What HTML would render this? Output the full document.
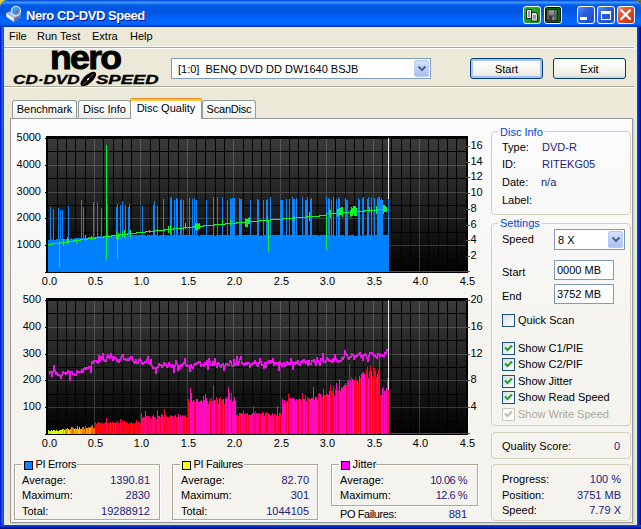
<!DOCTYPE html>
<html><head><meta charset="utf-8"><title>Nero CD-DVD Speed</title>
<style>
html,body{margin:0;padding:0;}
body{width:641px;height:529px;overflow:hidden;background:#ECE9D8;font-family:"Liberation Sans",sans-serif;font-size:11px;color:#000;position:relative;}
.a{position:absolute;white-space:nowrap;line-height:13px;}
.v{color:#1b1b7a;text-align:right;}
.bl{color:#0046D5;}
#win{position:absolute;left:0;top:0;width:641px;height:529px;background:#ECE9D8;}
#tbar{position:absolute;left:0;top:0;width:641px;height:27px;border-radius:7px 7px 0 0;
 background:linear-gradient(180deg,#0951DC 0px,#0B55DE 1px,#2C82F8 1.6px,#3C96FF 2.5px,#2680F6 3.5px,#0B66EA 4.5px,#0358E4 6px,#0055E2 8px,#0055E2 13px,#0064FA 18px,#0066FF 19px,#0066FF 23.5px,#005EF4 24.5px,#0046D4 25.7px,#002EB4 27px);}
#bl,#br,#bb{position:absolute;background:#0a45d8;}
#bl{left:0;top:27px;width:4px;height:502px;background:linear-gradient(90deg,#0019CF 0,#0019CF 1px,#0A46E2 1px,#0A46E2 2px,#166AEE 2px,#166AEE 3px,#0550DD 3px,#0550DD 4px);}
#br{left:637px;top:27px;width:4px;height:502px;background:linear-gradient(90deg,#0A44E8 0,#0A44E8 1px,#0030D0 1px,#0030D0 2px,#0020A8 2px,#0020A8 3px,#001088 3px,#001088 4px);}
#bb{left:0;top:525px;width:641px;height:4px;background:linear-gradient(180deg,#0A44E8 0,#0A44E8 1px,#0030D0 1px,#0030D0 2px,#0020A8 2px,#0020A8 3px,#001088 3px,#001088 4px);}
#title{left:26px;top:7.5px;font-weight:bold;font-size:13px;letter-spacing:-0.45px;color:#fff;line-height:16px;text-shadow:1px 1px #0f1089;}
.menu{top:30px;}
.sep1{position:absolute;left:4px;top:47px;width:630px;height:1px;background:#ACA899;}
.sep2{position:absolute;left:4px;top:48px;width:631px;height:1px;background:#fff;}
.btn{position:absolute;box-sizing:border-box;border:1px solid #003C74;border-radius:3px;background:linear-gradient(180deg,#fff 0%,#F4F3EE 60%,#ECEBE5 85%,#D6D0C5 100%);text-align:center;line-height:19px;}
.tab{position:absolute;box-sizing:border-box;border:1px solid #919B9C;border-bottom:none;border-radius:3px 3px 0 0;background:linear-gradient(180deg,#fff,#F6F5F0 70%,#ECEBE6);text-align:center;line-height:17px;}
#panel{position:absolute;left:10px;top:118px;width:623px;height:405px;box-sizing:border-box;box-shadow:1px 1px 0 #D8D5C4, 2px 2px 0 #E4E1D0;border:1px solid #919B9C;background:linear-gradient(180deg,#FCFCFE,#F4F3EE 60%,#F4F3EE);}
.gb{position:absolute;box-sizing:border-box;border:1px solid #D0D0BF;border-radius:4px;}
.gbs{position:absolute;box-sizing:border-box;border:1px solid #ACA899;box-shadow:1px 1px 0 #fff, inset 1px 1px 0 #fff;}
.gt{position:absolute;background:#F6F5F1;padding:0 2px;line-height:13px;white-space:nowrap;}
.inp{position:absolute;box-sizing:border-box;border:1px solid #7F9DB9;background:#fff;line-height:17px;padding-left:3px;}
.cb{position:absolute;box-sizing:border-box;width:13px;height:13px;border:1px solid #1C5180;background:linear-gradient(135deg,#DCDCD7,#fff);}
.sq{position:absolute;box-sizing:border-box;width:9px;height:9px;border:1px solid #000;}
</style></head><body>
<div id="win">
<div class="a" style="left:0;top:0;width:6px;height:6px;background:#E6CC3A"></div><div class="a" style="left:635px;top:0;width:6px;height:6px;background:#6B6B2E"></div><div id="tbar"></div><div id="bl"></div><div id="br"></div><div id="bb"></div>

<style>
.capb{top:6px;width:18px;height:18px;box-sizing:border-box;border:1px solid #fff;border-radius:3px;background:linear-gradient(135deg,#5a8df0 0%,#2a5fe0 40%,#1f4fd0 80%,#2a60e8 100%);}
.ddb{width:15px;height:17px;box-sizing:border-box;border:1px solid #B7CAF5;border-radius:2px;background:linear-gradient(180deg,#D5E0FD,#BBCDF9 60%,#A9BEF4);}
.ax{color:#000;}
.vl{color:#1b1b7a;}
.lg{font-size:13.2px;line-height:14px;font-weight:bold;font-style:italic;transform-origin:0 0;-webkit-text-stroke:0.35px #000;}
.ls{letter-spacing:-0.5px;}
</style>
<!-- title bar -->
<svg class="a" style="left:4px;top:4px" width="20" height="20" viewBox="4 4 20 20">
 <polygon points="6,13 12.5,10.5 21,14 14,18.5" fill="#b4b6dc"/>
 <polygon points="6,13 14,18.5 14,22 6.5,16.8" fill="#f6f6ff"/>
 <polygon points="14,18.5 21,14 21,17.5 14,22" fill="#7a7cb6"/>
 <path d="M14.5 20.2L20.5 16.3" stroke="#4a4c8a" stroke-width="0.8"/>
 <circle cx="16" cy="11" r="4.6" fill="#3a9cf0" stroke="#cfe8ff" stroke-width="1.2"/>
 <path d="M14.6 12.2L19 9.3L16.4 13Z" fill="#f02818"/>
 <rect x="12.6" y="19.6" width="1.4" height="1.2" fill="#e8d020"/>
</svg>
<div class="a" id="title">Nero CD-DVD Speed</div>
<!-- caption buttons -->
<div class="a" style="left:523px;top:6px;width:18px;height:18px;box-sizing:border-box;border:1px solid #fff;border-radius:3px;background:linear-gradient(135deg,#2cb82c,#0a8c0a);"></div>
<svg class="a" style="left:525px;top:8px" width="14" height="14" viewBox="525 8 14 14"><rect x="526.5" y="9.5" width="5" height="9" fill="#e4e4e4" stroke="#222"/><path d="M531.5 12.5h4l2 2v6.5h-6z" fill="#dcdcdc" stroke="#222"/><path d="M528 12h2M528 14h2M528 16h2M533 16h3M533 18h3" stroke="#555" stroke-width="1"/></svg>
<div class="a" style="left:543.5px;top:6px;width:18px;height:18px;box-sizing:border-box;border:1px solid #fff;border-radius:3px;background:#0a6a0a;box-shadow:inset 0 0 0 1px #021802;"></div>
<svg class="a" style="left:545px;top:8px" width="14" height="14" viewBox="545 8 14 14"><rect x="546.5" y="9.5" width="11" height="11" fill="#5a5f5a" stroke="#1c201c"/><rect x="549" y="10" width="5" height="4.5" fill="#8c908c"/><rect x="549" y="16" width="6" height="4.5" fill="#3a3e3a"/><rect x="552.5" y="16.5" width="2" height="3.5" fill="#9a9e9a"/><rect x="555.5" y="10.5" width="1.2" height="1.2" fill="#30d030"/></svg>
<div class="a capb" style="left:577px;"></div><div class="a" style="left:580px;top:17px;width:7px;height:3px;background:#fff"></div>
<div class="a capb" style="left:597px;"></div><div class="a" style="left:600.5px;top:10.5px;width:10px;height:9.5px;box-sizing:border-box;border:1px solid #fff;border-top:3px solid #fff"></div>
<div class="a capb" style="left:617px;width:18px;background:linear-gradient(135deg,#f09070 0%,#e65a30 30%,#d8421a 65%,#c03010 100%);"></div>
<svg class="a" style="left:620px;top:9px" width="12" height="12" viewBox="0 0 12 12"><path d="M1.3 1.3L10 10M10 1.3L1.3 10" stroke="#fff" stroke-width="2.2" stroke-linecap="round"/></svg>
<!-- menu -->
<div class="a menu" style="left:9px">File</div>
<div class="a menu" style="left:37px">Run Test</div>
<div class="a menu" style="left:92px">Extra</div>
<div class="a menu" style="left:130px">Help</div>
<div class="a" style="left:4px;top:46px;width:631px;height:1px;background:#fff;opacity:.8"></div><div class="sep1"></div><div class="sep2"></div>
<!-- toolbar -->
<div class="a" id="nero" style="left:50px;top:40px;font-size:33px;line-height:36px;font-weight:bold;letter-spacing:-1.6px;-webkit-text-stroke:0.9px #000;transform-origin:0 0;transform:scaleX(1.08);">nero</div>
<div class="a lg" id="cdspeed" style="left:13px;top:73px;transform:scaleX(1.30);">CD·DVD</div><div class="a lg" id="cdspeed2" style="left:95.5px;top:73px;transform:scaleX(1.40);">SPEED</div>
<svg class="a" style="left:78px;top:70px" width="20" height="18" viewBox="78 70 20 18"><ellipse cx="88.3" cy="79" rx="9.7" ry="4.3" transform="rotate(-42 88.3 79)" fill="#000"/><ellipse cx="88.1" cy="79.1" rx="1.5" ry="0.8" transform="rotate(-42 88.1 79.1)" fill="#fff"/><path d="M89.5 77.8L93.5 73.8M87 80.4L83.2 84.6" stroke="#fff" stroke-width="0.6" stroke-opacity="0.8"/></svg>
<div class="a" style="left:4px;top:86px;width:630px;height:1px;background:#ACA899"></div>
<div class="a" style="left:4px;top:87px;width:630px;height:1px;background:#fff"></div>
<div class="inp" style="left:171px;top:58px;width:260px;height:21px;line-height:21px;padding-left:6px;white-space:pre">[1:0]  BENQ DVD DD DW1640 BSJB</div>
<div class="a ddb" style="left:414px;top:60px;"></div>
<svg class="a" style="left:417px;top:65px" width="10" height="8" viewBox="0 0 10 8"><path d="M1.5 1.5L5 5L8.5 1.5" stroke="#4D6185" stroke-width="2" fill="none"/></svg>
<div class="btn" style="left:470px;top:58px;width:73px;height:21px;line-height:21px;box-shadow:inset 0 0 0 2px #A9C4F0;">Start</div>
<div class="btn" style="left:553px;top:58px;width:73px;height:21px;line-height:21px;">Exit</div>
<!-- tabs -->
<div class="tab" style="left:12px;top:100px;width:65px;height:18px;">Benchmark</div>
<div class="tab" style="left:78px;top:100px;width:53px;height:18px;">Disc Info</div>
<div class="tab" style="left:202px;top:100px;width:54px;height:18px;letter-spacing:-0.2px">ScanDisc</div>
<div id="panel"></div>
<div class="tab" style="left:130px;top:98px;width:72px;height:21px;background:#FCFCFE;border-top:none;line-height:20px;"><div style="position:absolute;left:-1px;top:0;width:72px;height:3px;box-sizing:border-box;background:#FFC73C;border-top:1px solid #E68B2C;border-radius:3px 3px 0 0"></div>Disc Quality</div>
<svg class="a" style="left:0;top:132px" width="641" height="150" viewBox="0 132 641 150" shape-rendering="crispEdges">
<defs><linearGradient id="ga" x1="0" y1="0" x2="0" y2="1"><stop offset="0" stop-color="#3a3a3a"/><stop offset="0.5" stop-color="#202020"/><stop offset="1" stop-color="#030303"/></linearGradient></defs>
<rect x="46" y="136" width="422" height="137" fill="#000"/>
<rect x="48" y="139" width="418" height="132" fill="url(#ga)"/>
<path d="M57.5 138V271M66.5 138V271M75.5 138V271M85.5 138V271M103.5 138V271M113.5 138V271M122.5 138V271M131.5 138V271M150.5 138V271M159.5 138V271M168.5 138V271M178.5 138V271M196.5 138V271M205.5 138V271M215.5 138V271M224.5 138V271M243.5 138V271M252.5 138V271M261.5 138V271M270.5 138V271M289.5 138V271M298.5 138V271M308.5 138V271M317.5 138V271M335.5 138V271M345.5 138V271M354.5 138V271M363.5 138V271M382.5 138V271M391.5 138V271M401.5 138V271M410.5 138V271M428.5 138V271M438.5 138V271M447.5 138V271M456.5 138V271M48 151.5H468M48 178.5H468M48 205.5H468M48 232.5H468M48 259.5H468" stroke="#000" stroke-width="1" fill="none"/>
<path d="M94.5 139V271M140.5 139V271M187.5 139V271M233.5 139V271M280.5 139V271M326.5 139V271M373.5 139V271M419.5 139V271M48 165.5H466M48 192.5H466M48 218.5H466M48 245.5H466" stroke="#fff" stroke-opacity="0.18" stroke-width="1" fill="none"/>
<path d="M48 271.5H470" stroke="#4e4e4e" stroke-width="1" fill="none"/>
<path d="M45 138.5H48M45 165.5H48M45 192.5H48M45 218.5H48M45 245.5H48M45 272.5H48" stroke="#000" stroke-width="1" fill="none"/>
<path d="M466 256.5H470M466 240.5H470M466 225.5H470M466 209.5H470M466 193.5H470M466 177.5H470M466 162.5H470M466 146.5H470" stroke="#505050" stroke-width="1" fill="none"/>
<path d="M48.5 272V240.0M49.5 272V239.9M50.5 272V239.9M51.5 272V239.4M52.5 272V239.7M53.5 272V239.7M54.5 272V240.4M55.5 272V239.9M56.5 272V239.4M57.5 272V239.4M58.5 272V239.7M59.5 272V239.2M60.5 272V239.6M61.5 272V239.1M62.5 272V239.0M63.5 272V239.0M64.5 272V238.9M65.5 272V238.8M66.5 272V238.8M67.5 272V238.7M68.5 272V238.6M69.5 272V238.9M70.5 272V238.5M71.5 272V238.4M72.5 272V239.1M73.5 272V238.7M74.5 272V238.2M75.5 272V238.1M76.5 272V237.7M77.5 272V237.6M78.5 272V238.3M79.5 272V237.8M80.5 272V238.2M81.5 272V238.1M82.5 272V237.6M83.5 272V237.6M84.5 272V237.5M85.5 272V237.4M86.5 272V237.8M87.5 272V238.1M88.5 272V237.2M89.5 272V237.2M90.5 272V237.1M91.5 272V237.0M92.5 272V237.3M93.5 272V236.9M94.5 272V237.2M95.5 272V236.7M96.5 272V237.1M97.5 272V237.4M98.5 272V236.1M99.5 272V236.5M100.5 272V236.4M101.5 272V236.7M102.5 272V236.7M103.5 272V235.8M104.5 272V236.1M105.5 272V236.0M106.5 272V236.0M107.5 272V236.3M108.5 272V235.4M109.5 272V235.8M110.5 272V236.1M111.5 272V235.6M112.5 272V236.0M113.5 272V235.5M114.5 272V235.4M115.5 272V234.9M116.5 272V235.7M117.5 272V235.2M118.5 272V235.9M119.5 272V235.1M120.5 272V235.0M121.5 272V235.4M122.5 272V235.0M123.5 272V235.0M124.5 272V235.0M125.5 272V235.0M126.5 272V235.8M127.5 272V235.0M128.5 272V234.6M129.5 272V235.8M130.5 272V235.0M131.5 272V235.0M132.5 272V235.4M133.5 272V235.0M134.5 272V235.4M135.5 272V235.0M136.5 272V235.0M137.5 272V234.6M138.5 272V235.0M139.5 272V235.0M140.5 272V235.4M141.5 272V235.0M142.5 272V235.0M143.5 272V235.4M144.5 272V235.0M145.5 272V235.0M146.5 272V235.8M147.5 272V235.0M148.5 272V235.0M149.5 272V235.0M150.5 272V235.0M151.5 272V235.0M152.5 272V234.6M153.5 272V235.0M154.5 272V235.8M155.5 272V235.4M156.5 272V235.4M157.5 272V235.8M158.5 272V235.8M159.5 272V235.0M160.5 272V235.0M161.5 272V234.6M162.5 272V235.0M163.5 272V235.4M164.5 272V235.0M165.5 272V235.4M166.5 272V235.8M167.5 272V235.0M168.5 272V235.0M169.5 272V235.8M170.5 272V235.0M171.5 272V235.0M172.5 272V235.0M173.5 272V234.6M174.5 272V234.6M175.5 272V235.0M176.5 272V235.0M177.5 272V234.6M178.5 272V234.6M179.5 272V235.0M180.5 272V234.6M181.5 272V235.4M182.5 272V234.6M183.5 272V235.8M184.5 272V235.0M185.5 272V235.0M186.5 272V234.6M187.5 272V235.0M188.5 272V234.6M189.5 272V235.0M190.5 272V235.0M191.5 272V235.0M192.5 272V235.0M193.5 272V235.0M194.5 272V235.4M195.5 272V235.0M196.5 272V235.0M197.5 272V235.0M198.5 272V235.0M199.5 272V235.8M200.5 272V235.0M201.5 272V235.0M202.5 272V234.6M203.5 272V235.0M204.5 272V235.0M205.5 272V235.0M206.5 272V235.8M207.5 272V235.0M208.5 272V235.0M209.5 272V235.0M210.5 272V235.0M211.5 272V235.0M212.5 272V235.4M213.5 272V235.0M214.5 272V235.0M215.5 272V235.8M216.5 272V235.0M217.5 272V235.8M218.5 272V235.4M219.5 272V235.0M220.5 272V234.6M221.5 272V235.0M222.5 272V235.0M223.5 272V234.6M224.5 272V235.0M225.5 272V235.0M226.5 272V235.0M227.5 272V235.0M228.5 272V235.0M229.5 272V235.0M230.5 272V235.0M231.5 272V234.6M232.5 272V235.0M233.5 272V235.0M234.5 272V235.0M235.5 272V235.8M236.5 272V235.4M237.5 272V235.0M238.5 272V235.0M239.5 272V235.0M240.5 272V235.0M241.5 272V235.0M242.5 272V235.0M243.5 272V235.4M244.5 272V235.0M245.5 272V235.4M246.5 272V235.4M247.5 272V235.0M248.5 272V235.0M249.5 272V234.6M250.5 272V235.8M251.5 272V235.4M252.5 272V235.4M253.5 272V234.6M254.5 272V234.6M255.5 272V234.6M256.5 272V235.0M257.5 272V235.0M258.5 272V235.8M259.5 272V235.8M260.5 272V235.8M261.5 272V234.6M262.5 272V235.8M263.5 272V235.4M264.5 272V235.0M265.5 272V235.0M266.5 272V235.0M267.5 272V235.0M268.5 272V235.0M269.5 272V235.0M270.5 272V234.6M271.5 272V235.0M272.5 272V235.0M273.5 272V235.0M274.5 272V235.0M275.5 272V235.0M276.5 272V235.0M277.5 272V235.0M278.5 272V235.0M279.5 272V235.0M280.5 272V235.4M281.5 272V235.0M282.5 272V235.0M283.5 272V235.0M284.5 272V235.4M285.5 272V235.0M286.5 272V235.4M287.5 272V235.0M288.5 272V235.0M289.5 272V235.4M290.5 272V235.0M291.5 272V235.0M292.5 272V235.8M293.5 272V235.0M294.5 272V235.4M295.5 272V235.0M296.5 272V235.0M297.5 272V234.6M298.5 272V235.0M299.5 272V235.0M300.5 272V235.4M301.5 272V235.0M302.5 272V235.0M303.5 272V235.0M304.5 272V235.0M305.5 272V235.8M306.5 272V235.0M307.5 272V235.0M308.5 272V235.0M309.5 272V235.0M310.5 272V235.0M311.5 272V235.0M312.5 272V235.0M313.5 272V235.0M314.5 272V234.6M315.5 272V235.0M316.5 272V234.6M317.5 272V235.0M318.5 272V235.0M319.5 272V235.8M320.5 272V234.6M321.5 272V235.0M322.5 272V235.4M323.5 272V235.0M324.5 272V235.0M325.5 272V235.4M326.5 272V235.0M327.5 272V235.0M328.5 272V234.6M329.5 272V235.4M330.5 272V235.0M331.5 272V235.8M332.5 272V235.4M333.5 272V235.0M334.5 272V234.6M335.5 272V235.8M336.5 272V235.0M337.5 272V234.6M338.5 272V235.8M339.5 272V235.0M340.5 272V235.4M341.5 272V235.0M342.5 272V235.0M343.5 272V235.0M344.5 272V235.8M345.5 272V235.0M346.5 272V235.4M347.5 272V235.4M348.5 272V235.8M349.5 272V235.4M350.5 272V235.0M351.5 272V234.6M352.5 272V235.0M353.5 272V235.4M354.5 272V235.8M355.5 272V235.8M356.5 272V235.8M357.5 272V235.8M358.5 272V235.0M359.5 272V235.8M360.5 272V235.0M361.5 272V235.8M362.5 272V235.0M363.5 272V234.6M364.5 272V235.8M365.5 272V235.0M366.5 272V235.0M367.5 272V235.4M368.5 272V235.0M369.5 272V235.0M370.5 272V234.6M371.5 272V235.0M372.5 272V235.0M373.5 272V235.8M374.5 272V235.0M375.5 272V235.0M376.5 272V235.0M377.5 272V235.0M378.5 272V234.6M379.5 272V235.4M380.5 272V235.0M381.5 272V235.0M382.5 272V235.8M383.5 272V234.6M384.5 272V235.0M385.5 272V235.0M386.5 272V235.0M387.5 272V235.0M388.5 272V235.0" stroke="#0080ff" stroke-width="1" fill="none"/>
<path d="M50.5 240V206.9M53.5 240V209.4M58.5 240V208.0M60.5 240V209.8M62.5 240V210.0M68.5 240V205.5M81.5 240V200.1M83.5 240V206.7M93.5 240V202.1M97.5 240V201.9M101.5 240V208.0M107.5 240V203.8M116.5 240V206.7M117.5 240V203.8M120.5 240V205.1M122.5 240V201.2M125.5 240V205.1M128.5 240V206.9M129.5 240V204.2M142.5 240V205.9M153.5 240V205.4M154.5 240V200.5M157.5 240V206.1M163.5 240V198.6M170.5 240V197.6M171.5 240V196.6M174.5 240V199.5M176.5 240V198.2M177.5 240V199.0M180.5 240V199.6M181.5 240V199.0M183.5 240V199.7M189.5 240V197.9M192.5 240V199.3M194.5 240V198.1M196.5 240V199.8M206.5 240V199.6M213.5 240V196.8M217.5 240V197.0M222.5 240V197.3M227.5 240V199.9M230.5 240V198.0M231.5 240V198.7M232.5 240V197.6M233.5 240V198.3M234.5 240V197.9M239.5 240V197.7M240.5 240V198.5M241.5 240V198.5M250.5 240V199.7M257.5 240V198.9M258.5 240V199.8M263.5 240V199.5M266.5 240V200.0M267.5 240V198.8M270.5 240V197.1M280.5 240V199.5M281.5 240V199.9M282.5 240V199.7M286.5 240V198.5M289.5 240V199.0M292.5 240V197.2M293.5 240V199.4M294.5 240V198.5M296.5 240V197.5M302.5 240V196.7M305.5 240V199.5M306.5 240V200.0M307.5 240V196.8M310.5 240V199.3M311.5 240V197.9M326.5 240V197.0M328.5 240V197.5M329.5 240V199.2M331.5 240V199.6M333.5 240V196.7M336.5 240V198.7M338.5 240V196.7M339.5 240V199.0M345.5 240V197.7M346.5 240V199.6M347.5 240V199.9M358.5 240V198.3M359.5 240V200.0M362.5 240V197.6M363.5 240V196.8M367.5 240V198.6M368.5 240V196.6M371.5 240V197.2M374.5 240V197.9M377.5 240V198.6M378.5 240V197.0M379.5 240V196.6M380.5 240V199.5M381.5 240V197.6M382.5 240V199.9M388.5 240V198.6" stroke="#0a84ff" stroke-width="1" fill="none"/>
<path d="M388.5 138V198.6" stroke="#e4e4e4" stroke-width="1" fill="none"/>
<path d="M48.5 244V245M49.5 244V245M50.5 244V245M51.5 244V245M52.5 243V245M53.5 243V244M54.5 243V244M55.5 243V244M56.5 243V244M57.5 243V244M58.5 243V244M59.5 242V244M60.5 242V243M61.5 242V243M62.5 242V243M63.5 242V243M64.5 242V243M65.5 242V243M66.5 241V243M67.5 241V242M68.5 241V242M69.5 241V242M70.5 241V242M71.5 241V242M72.5 241V242M73.5 240V242M74.5 240V241M75.5 240V241M76.5 240V241M77.5 240V241M78.5 240V241M79.5 240V241M80.5 239V241M81.5 239V240M82.5 239V240M83.5 239V240M84.5 239V240M85.5 239V240M86.5 239V240M87.5 238V240M88.5 238V239M89.5 238V239M90.5 238V239M91.5 238V239M92.5 238V239M93.5 238V239M94.5 238V239M95.5 237V239M96.5 237V238M97.5 237V238M98.5 237V238M99.5 237V238M100.5 237V238M101.5 237V238M102.5 237V238M103.5 236V238M104.5 236V237M105.5 236V237M106.5 236V237M107.5 236V237M108.5 236V237M109.5 236V237M110.5 236V237M111.5 235V237M112.5 235V236M113.5 235V236M114.5 235V236M115.5 235V236M116.5 235V236M117.5 235V236M118.5 235V236M119.5 234V236M120.5 234V235M121.5 234V235M122.5 234V235M123.5 234V235M124.5 234V235M125.5 234V235M126.5 234V235M127.5 233V235M128.5 233V234M129.5 233V234M130.5 233V234M131.5 233V234M132.5 233V234M133.5 233V234M134.5 233V234M135.5 233V234M136.5 232V234M137.5 232V233M138.5 232V233M139.5 232V233M140.5 232V233M141.5 232V233M142.5 232V233M143.5 232V233M144.5 232V233M145.5 231V233M146.5 231V232M147.5 231V232M148.5 231V232M149.5 231V232M150.5 231V232M151.5 231V232M152.5 231V232M153.5 231V232M154.5 230V232M155.5 230V231M156.5 230V231M157.5 230V231M158.5 230V231M159.5 230V231M160.5 230V231M161.5 230V231M162.5 230V231M163.5 230V231M164.5 229V231M165.5 229V230M166.5 229V230M167.5 229V230M168.5 229V230M169.5 229V230M170.5 229V230M171.5 229V230M172.5 229V230M173.5 228V230M174.5 228V229M175.5 228V229M176.5 228V229M177.5 228V229M178.5 228V229M179.5 228V229M180.5 228V229M181.5 228V229M182.5 228V229M183.5 227V229M184.5 227V228M185.5 227V228M186.5 227V228M187.5 227V228M188.5 227V228M189.5 227V228M190.5 227V228M191.5 227V228M192.5 227V228M193.5 226V228M194.5 226V227M195.5 226V227M196.5 226V227M197.5 226V227M198.5 226V227M199.5 226V227M200.5 226V227M201.5 226V227M202.5 226V227M203.5 225V227M204.5 225V226M205.5 225V226M206.5 225V226M207.5 225V226M208.5 225V226M209.5 225V226M210.5 225V226M211.5 225V226M212.5 225V226M213.5 225V226M214.5 224V226M215.5 224V225M216.5 224V225M217.5 224V225M218.5 224V225M219.5 224V225M220.5 224V225M221.5 224V225M222.5 224V225M223.5 224V225M224.5 224V225M225.5 223V225M226.5 223V224M227.5 223V224M228.5 223V224M229.5 223V224M230.5 223V224M231.5 223V224M232.5 223V224M233.5 223V224M234.5 223V224M235.5 223V224M236.5 222V224M237.5 222V223M238.5 222V223M239.5 222V223M240.5 222V223M241.5 222V223M242.5 222V223M243.5 222V223M244.5 222V223M245.5 222V223M246.5 222V223M247.5 221V223M248.5 221V222M249.5 221V222M250.5 221V222M251.5 221V222M252.5 221V222M253.5 221V222M254.5 221V222M255.5 221V222M256.5 221V222M257.5 221V222M258.5 220V222M259.5 220V221M260.5 220V221M261.5 220V221M262.5 220V221M263.5 220V221M264.5 220V221M265.5 220V221M266.5 220V221M267.5 220V221M268.5 220V221M269.5 220V221M270.5 219V221M271.5 219V220M272.5 219V220M273.5 219V220M274.5 219V220M275.5 219V220M276.5 219V220M277.5 219V220M278.5 219V220M279.5 219V220M280.5 219V220M281.5 219V220M282.5 218V220M283.5 218V219M284.5 218V219M285.5 218V219M286.5 218V219M287.5 218V219M288.5 218V219M289.5 218V219M290.5 218V219M291.5 218V219M292.5 218V219M293.5 218V219M294.5 217V219M295.5 217V218M296.5 217V218M297.5 217V218M298.5 217V218M299.5 217V218M300.5 217V218M301.5 217V218M302.5 217V218M303.5 217V218M304.5 217V218M305.5 217V218M306.5 216V218M307.5 216V217M308.5 216V217M309.5 216V217M310.5 216V217M311.5 216V217M312.5 216V217M313.5 216V217M314.5 216V217M315.5 216V217M316.5 216V217M317.5 216V217M318.5 216V217M319.5 215V217M320.5 215V216M321.5 215V216M322.5 215V216M323.5 215V216M324.5 215V216M325.5 215V216M326.5 213V216M327.5 213V214M328.5 213V214M329.5 213V214M330.5 213V214M331.5 213V214M332.5 213V214M333.5 213V214M334.5 213V214M335.5 213V214M336.5 213V214M337.5 212V214M338.5 212V213M339.5 212V213M340.5 212V213M341.5 212V213M342.5 212V213M343.5 212V213M344.5 212V213M345.5 212V213M346.5 212V213M347.5 212V213M348.5 212V213M349.5 212V213M350.5 211V213M351.5 211V212M352.5 211V212M353.5 211V212M354.5 211V212M355.5 211V212M356.5 211V212M357.5 211V212M358.5 211V212M359.5 211V212M360.5 211V212M361.5 211V212M362.5 211V212M363.5 211V212M364.5 210V212M365.5 210V211M366.5 210V211M367.5 210V211M368.5 210V211M369.5 210V211M370.5 210V211M371.5 210V211M372.5 210V211M373.5 210V211M374.5 210V211M375.5 210V211M376.5 210V211M377.5 209V211M378.5 209V210M379.5 209V210M380.5 209V210M381.5 209V210M382.5 209V210M383.5 209V210M384.5 209V210M385.5 209V210M386.5 209V210M387.5 209V210" stroke="#0cf62c" stroke-width="1" fill="none"/>
<path d="M63.5 239V246M67.5 237V243M68.5 239V244M76.5 239V244M85.5 235V241M91.5 236V240M106.5 233V239M116.5 231V239M118.5 233V239M122.5 232V237M124.5 230V238M130.5 230V237M149.5 230V233M168.5 226V233M170.5 226V233M185.5 223V229M222.5 220V226M230.5 220V226M267.5 216V222M293.5 216V222M309.5 212V221M329.5 209V215M330.5 210V218M337.5 209V217M369.5 207V212M371.5 207V215M376.5 206V214M195.5 223V230M196.5 224V230M197.5 223V231M198.5 224V229M199.5 223V229M338.5 209V215M339.5 208V216M340.5 208V215M341.5 207V215M342.5 207V217M350.5 210V217M351.5 207V216M352.5 208V216M353.5 206V214M354.5 206V216M355.5 206V216M356.5 208V216M245.5 219V227M246.5 219V227M247.5 219V227M248.5 218V224M249.5 217V224M383.5 205V214M384.5 205V212M385.5 206V212M386.5 207V212M59.5 243V268M106.5 145V260M117.5 235V259M268.5 220V252M326.5 215V250" stroke="#0cf62c" stroke-width="1" fill="none"/>
</svg>
<svg class="a" style="left:0;top:294px" width="641" height="150" viewBox="0 294 641 150" shape-rendering="crispEdges">
<defs><linearGradient id="gb" x1="0" y1="0" x2="0" y2="1"><stop offset="0" stop-color="#3a3a3a"/><stop offset="0.5" stop-color="#202020"/><stop offset="1" stop-color="#030303"/></linearGradient></defs>
<rect x="46" y="298" width="422" height="137" fill="#000"/>
<rect x="48" y="301" width="418" height="132" fill="url(#gb)"/>
<path d="M57.5 300V433M66.5 300V433M75.5 300V433M85.5 300V433M103.5 300V433M113.5 300V433M122.5 300V433M131.5 300V433M150.5 300V433M159.5 300V433M168.5 300V433M178.5 300V433M196.5 300V433M205.5 300V433M215.5 300V433M224.5 300V433M243.5 300V433M252.5 300V433M261.5 300V433M270.5 300V433M289.5 300V433M298.5 300V433M308.5 300V433M317.5 300V433M335.5 300V433M345.5 300V433M354.5 300V433M363.5 300V433M382.5 300V433M391.5 300V433M401.5 300V433M410.5 300V433M428.5 300V433M438.5 300V433M447.5 300V433M456.5 300V433M48 313.5H468M48 340.5H468M48 367.5H468M48 394.5H468M48 421.5H468" stroke="#000" stroke-width="1" fill="none"/>
<path d="M94.5 301V433M140.5 301V433M187.5 301V433M233.5 301V433M280.5 301V433M326.5 301V433M373.5 301V433M419.5 301V433M48 327.5H466M48 354.5H466M48 380.5H466M48 407.5H466" stroke="#fff" stroke-opacity="0.18" stroke-width="1" fill="none"/>
<path d="M48 433.5H470" stroke="#4e4e4e" stroke-width="1" fill="none"/>
<path d="M45 300.5H48M45 327.5H48M45 354.5H48M45 380.5H48M45 407.5H48M45 434.5H48" stroke="#000" stroke-width="1" fill="none"/>
<path d="M466 407.5H470M466 380.5H470M466 354.5H470M466 327.5H470M466 300.5H470" stroke="#505050" stroke-width="1" fill="none"/>
<path d="M48.5 434V430.2" stroke="#c3ff00" stroke-width="1" fill="none"/>
<path d="M49.5 434V430.7M55.5 434V430.6" stroke="#bbff00" stroke-width="1" fill="none"/>
<path d="M50.5 434V431.2" stroke="#bcff00" stroke-width="1" fill="none"/>
<path d="M51.5 434V430.2" stroke="#e5ff00" stroke-width="1" fill="none"/>
<path d="M52.5 434V430.7M58.5 434V430.8" stroke="#b9ff00" stroke-width="1" fill="none"/>
<path d="M53.5 434V430.0M68.5 434V428.9" stroke="#f6f900" stroke-width="1" fill="none"/>
<path d="M54.5 434V429.7" stroke="#f1fe00" stroke-width="1" fill="none"/>
<path d="M56.5 434V429.9" stroke="#f2fd00" stroke-width="1" fill="none"/>
<path d="M57.5 434V430.7" stroke="#c4ff00" stroke-width="1" fill="none"/>
<path d="M59.5 434V429.6" stroke="#ffcb00" stroke-width="1" fill="none"/>
<path d="M60.5 434V430.2" stroke="#d8ff00" stroke-width="1" fill="none"/>
<path d="M61.5 434V430.2" stroke="#c6ff00" stroke-width="1" fill="none"/>
<path d="M62.5 434V428.6" stroke="#fef100" stroke-width="1" fill="none"/>
<path d="M63.5 434V429.1M80.5 434V428.9" stroke="#ff9500" stroke-width="1" fill="none"/>
<path d="M64.5 434V430.4" stroke="#d7ff00" stroke-width="1" fill="none"/>
<path d="M65.5 434V428.6" stroke="#ff7f00" stroke-width="1" fill="none"/>
<path d="M66.5 434V428.9" stroke="#ff8b00" stroke-width="1" fill="none"/>
<path d="M67.5 434V427.6" stroke="#ff9800" stroke-width="1" fill="none"/>
<path d="M69.5 434V429.6" stroke="#dbff00" stroke-width="1" fill="none"/>
<path d="M70.5 434V428.5" stroke="#ff8a00" stroke-width="1" fill="none"/>
<path d="M71.5 434V427.3" stroke="#ff8700" stroke-width="1" fill="none"/>
<path d="M72.5 434V427.4" stroke="#ff5601" stroke-width="1" fill="none"/>
<path d="M73.5 434V427.7" stroke="#ff6900" stroke-width="1" fill="none"/>
<path d="M74.5 434V428.9" stroke="#ffe500" stroke-width="1" fill="none"/>
<path d="M75.5 434V428.0" stroke="#ff7300" stroke-width="1" fill="none"/>
<path d="M76.5 434V428.6" stroke="#ffad00" stroke-width="1" fill="none"/>
<path d="M77.5 434V426.4" stroke="#ff9b00" stroke-width="1" fill="none"/>
<path d="M78.5 434V428.7" stroke="#ffb900" stroke-width="1" fill="none"/>
<path d="M79.5 434V427.0" stroke="#ffcc00" stroke-width="1" fill="none"/>
<path d="M81.5 434V428.7" stroke="#ffcf00" stroke-width="1" fill="none"/>
<path d="M82.5 434V426.7" stroke="#ff6e00" stroke-width="1" fill="none"/>
<path d="M83.5 434V427.1" stroke="#ff7700" stroke-width="1" fill="none"/>
<path d="M84.5 434V428.8" stroke="#ff8f00" stroke-width="1" fill="none"/>
<path d="M85.5 434V426.0M113.5 434V422.9" stroke="#ff3507" stroke-width="1" fill="none"/>
<path d="M86.5 434V427.7" stroke="#ffa000" stroke-width="1" fill="none"/>
<path d="M87.5 434V427.5" stroke="#ff9600" stroke-width="1" fill="none"/>
<path d="M88.5 434V426.9" stroke="#ff6c00" stroke-width="1" fill="none"/>
<path d="M89.5 434V428.4" stroke="#ffed00" stroke-width="1" fill="none"/>
<path d="M90.5 434V426.6" stroke="#ff9d00" stroke-width="1" fill="none"/>
<path d="M91.5 434V426.2" stroke="#ff6500" stroke-width="1" fill="none"/>
<path d="M92.5 434V424.9" stroke="#ff5900" stroke-width="1" fill="none"/>
<path d="M93.5 434V428.3" stroke="#ff8200" stroke-width="1" fill="none"/>
<path d="M94.5 434V427.8" stroke="#ff6a00" stroke-width="1" fill="none"/>
<path d="M95.5 434V422.1M101.5 434V422.1M125.5 434V422.1M139.5 434V422.2M260.5 434V414.3M354.5 434V379.6" stroke="#ff001f" stroke-width="1" fill="none"/>
<path d="M96.5 434V423.6" stroke="#ff0012" stroke-width="1" fill="none"/>
<path d="M97.5 434V423.2M99.5 434V423.1M166.5 434V416.1M385.5 434V390.9" stroke="#ff0016" stroke-width="1" fill="none"/>
<path d="M98.5 434V421.8M126.5 434V421.8" stroke="#ff110d" stroke-width="1" fill="none"/>
<path d="M100.5 434V422.9M109.5 434V422.9M188.5 434V398.8M221.5 434V400.6M237.5 434V413.7" stroke="#ff0018" stroke-width="1" fill="none"/>
<path d="M102.5 434V424.0" stroke="#ff090e" stroke-width="1" fill="none"/>
<path d="M103.5 434V423.3M108.5 434V423.4" stroke="#ff0014" stroke-width="1" fill="none"/>
<path d="M104.5 434V422.7M118.5 434V422.7M135.5 434V422.7M255.5 434V410.8M372.5 434V375.8" stroke="#ff001a" stroke-width="1" fill="none"/>
<path d="M105.5 434V421.5M298.5 434V398.6M301.5 434V402.5M369.5 434V370.9" stroke="#ff0024" stroke-width="1" fill="none"/>
<path d="M106.5 434V418.0M187.5 434V418.0" stroke="#ff046c" stroke-width="1" fill="none"/>
<path d="M107.5 434V421.9M217.5 434V398.1M246.5 434V414.2M291.5 434V398.5M366.5 434V369.6M370.5 434V364.8" stroke="#ff0021" stroke-width="1" fill="none"/>
<path d="M110.5 434V422.2" stroke="#ff200a" stroke-width="1" fill="none"/>
<path d="M111.5 434V422.6M119.5 434V422.6M215.5 434V400.4M245.5 434V412.9" stroke="#ff001b" stroke-width="1" fill="none"/>
<path d="M112.5 434V421.8M137.5 434V421.8M238.5 434V416.3M319.5 434V393.4M365.5 434V379.7" stroke="#ff0022" stroke-width="1" fill="none"/>
<path d="M114.5 434V422.9M123.5 434V422.8M127.5 434V422.8M186.5 434V416.8M195.5 434V401.9" stroke="#ff0019" stroke-width="1" fill="none"/>
<path d="M115.5 434V423.1" stroke="#ff3d05" stroke-width="1" fill="none"/>
<path d="M116.5 434V422.0M259.5 434V413.0M346.5 434V384.8" stroke="#ff0020" stroke-width="1" fill="none"/>
<path d="M117.5 434V421.3M124.5 434V421.3M216.5 434V397.3" stroke="#ff0027" stroke-width="1" fill="none"/>
<path d="M120.5 434V418.7" stroke="#ff035c" stroke-width="1" fill="none"/>
<path d="M121.5 434V423.0M122.5 434V420.3M129.5 434V423.0M130.5 434V423.0M134.5 434V423.0M297.5 434V400.0M321.5 434V395.3M332.5 434V390.8" stroke="#ff0017" stroke-width="1" fill="none"/>
<path d="M128.5 434V423.9" stroke="#ff040f" stroke-width="1" fill="none"/>
<path d="M131.5 434V422.2" stroke="#ff1f0b" stroke-width="1" fill="none"/>
<path d="M132.5 434V423.9" stroke="#ff050f" stroke-width="1" fill="none"/>
<path d="M133.5 434V423.3M183.5 434V416.3M266.5 434V412.3M308.5 434V397.5" stroke="#ff0015" stroke-width="1" fill="none"/>
<path d="M136.5 434V420.4M220.5 434V397.3M326.5 434V394.2" stroke="#ff0138" stroke-width="1" fill="none"/>
<path d="M138.5 434V422.2M280.5 434V412.9M335.5 434V388.8M349.5 434V364.0M374.5 434V368.4" stroke="#ff001e" stroke-width="1" fill="none"/>
<path d="M140.5 434V423.9" stroke="#ff060f" stroke-width="1" fill="none"/>
<path d="M141.5 434V413.1M254.5 434V413.3M263.5 434V413.3M272.5 434V413.0M279.5 434V413.2" stroke="#ff0898" stroke-width="1" fill="none"/>
<path d="M142.5 434V417.5" stroke="#ff0472" stroke-width="1" fill="none"/>
<path d="M143.5 434V417.2M169.5 434V417.2" stroke="#ff0575" stroke-width="1" fill="none"/>
<path d="M144.5 434V417.1" stroke="#ff0576" stroke-width="1" fill="none"/>
<path d="M145.5 434V410.5" stroke="#ff099f" stroke-width="1" fill="none"/>
<path d="M146.5 434V416.1M159.5 434V416.2M273.5 434V416.1" stroke="#ff0680" stroke-width="1" fill="none"/>
<path d="M147.5 434V415.9M211.5 434V398.1M360.5 434V378.2M380.5 434V394.7" stroke="#ff001c" stroke-width="1" fill="none"/>
<path d="M148.5 434V416.2M231.5 434V393.3M302.5 434V392.5" stroke="#ff0249" stroke-width="1" fill="none"/>
<path d="M149.5 434V415.9" stroke="#ff0682" stroke-width="1" fill="none"/>
<path d="M150.5 434V417.9" stroke="#ff046e" stroke-width="1" fill="none"/>
<path d="M151.5 434V418.7" stroke="#ff035d" stroke-width="1" fill="none"/>
<path d="M152.5 434V416.3M172.5 434V416.3" stroke="#ff067e" stroke-width="1" fill="none"/>
<path d="M153.5 434V414.6M249.5 434V414.6M250.5 434V414.6M271.5 434V414.6" stroke="#ff078f" stroke-width="1" fill="none"/>
<path d="M154.5 434V416.8M167.5 434V416.8" stroke="#ff0579" stroke-width="1" fill="none"/>
<path d="M155.5 434V417.3M248.5 434V414.8" stroke="#ff013b" stroke-width="1" fill="none"/>
<path d="M156.5 434V418.6M288.5 434V394.2" stroke="#ff0029" stroke-width="1" fill="none"/>
<path d="M157.5 434V410.4" stroke="#ff09a0" stroke-width="1" fill="none"/>
<path d="M158.5 434V415.7" stroke="#ff0684" stroke-width="1" fill="none"/>
<path d="M160.5 434V417.2" stroke="#ff002a" stroke-width="1" fill="none"/>
<path d="M161.5 434V413.7" stroke="#ff0896" stroke-width="1" fill="none"/>
<path d="M162.5 434V415.1M175.5 434V415.1" stroke="#ff078a" stroke-width="1" fill="none"/>
<path d="M163.5 434V416.9" stroke="#ff0578" stroke-width="1" fill="none"/>
<path d="M164.5 434V409.4M278.5 434V416.4M324.5 434V395.3M355.5 434V377.1M358.5 434V382.5M375.5 434V370.8" stroke="#ff001d" stroke-width="1" fill="none"/>
<path d="M165.5 434V415.4M182.5 434V415.4" stroke="#ff0687" stroke-width="1" fill="none"/>
<path d="M168.5 434V418.4" stroke="#ff0363" stroke-width="1" fill="none"/>
<path d="M170.5 434V415.2M274.5 434V414.2" stroke="#ff0136" stroke-width="1" fill="none"/>
<path d="M171.5 434V415.5M270.5 434V415.5" stroke="#ff0686" stroke-width="1" fill="none"/>
<path d="M173.5 434V417.9" stroke="#ff046f" stroke-width="1" fill="none"/>
<path d="M174.5 434V415.6M253.5 434V406.1" stroke="#ff0141" stroke-width="1" fill="none"/>
<path d="M176.5 434V417.2M240.5 434V412.7M267.5 434V413.0M356.5 434V380.2" stroke="#ff0135" stroke-width="1" fill="none"/>
<path d="M177.5 434V417.4M181.5 434V417.3" stroke="#ff0574" stroke-width="1" fill="none"/>
<path d="M178.5 434V413.6M258.5 434V413.4M269.5 434V413.7" stroke="#ff0897" stroke-width="1" fill="none"/>
<path d="M179.5 434V416.5" stroke="#ff057c" stroke-width="1" fill="none"/>
<path d="M180.5 434V415.0M185.5 434V415.0" stroke="#ff078b" stroke-width="1" fill="none"/>
<path d="M184.5 434V416.4" stroke="#ff0025" stroke-width="1" fill="none"/>
<path d="M189.5 434V402.5M387.5 434V389.0" stroke="#ff0245" stroke-width="1" fill="none"/>
<path d="M190.5 434V388.0M323.5 434V389.2M342.5 434V388.2M382.5 434V387.5M386.5 434V387.5" stroke="#ff0dc3" stroke-width="1" fill="none"/>
<path d="M191.5 434V393.0M229.5 434V392.7M320.5 434V393.6M388.5 434V392.3" stroke="#ff0cc1" stroke-width="1" fill="none"/>
<path d="M192.5 434V402.2M232.5 434V402.2" stroke="#ff0bb6" stroke-width="1" fill="none"/>
<path d="M193.5 434V399.8M201.5 434V399.7M204.5 434V399.7" stroke="#ff0cbc" stroke-width="1" fill="none"/>
<path d="M194.5 434V400.6M367.5 434V367.4" stroke="#ff013a" stroke-width="1" fill="none"/>
<path d="M196.5 434V398.5M197.5 434V399.2M219.5 434V399.0M223.5 434V398.8M225.5 434V398.7M282.5 434V399.2M294.5 434V398.8M296.5 434V398.6M299.5 434V399.0M300.5 434V398.8M303.5 434V399.1M304.5 434V398.5M309.5 434V398.6M310.5 434V398.6M312.5 434V398.1" stroke="#ff0cbe" stroke-width="1" fill="none"/>
<path d="M198.5 434V401.9M202.5 434V401.8" stroke="#ff0bb7" stroke-width="1" fill="none"/>
<path d="M199.5 434V402.4" stroke="#ff0bb5" stroke-width="1" fill="none"/>
<path d="M200.5 434V401.2M207.5 434V401.4M209.5 434V401.4M212.5 434V401.4" stroke="#ff0bb8" stroke-width="1" fill="none"/>
<path d="M203.5 434V395.5M205.5 434V394.0M325.5 434V395.4M327.5 434V393.9M328.5 434V395.1M334.5 434V395.5M381.5 434V395.1" stroke="#ff0cc0" stroke-width="1" fill="none"/>
<path d="M206.5 434V397.9M226.5 434V396.8M234.5 434V396.7M290.5 434V397.8M292.5 434V397.9M293.5 434V398.0M311.5 434V397.5M315.5 434V396.7M316.5 434V396.8" stroke="#ff0cbf" stroke-width="1" fill="none"/>
<path d="M208.5 434V404.0M218.5 434V403.9" stroke="#ff0bb1" stroke-width="1" fill="none"/>
<path d="M210.5 434V399.3" stroke="#ff002b" stroke-width="1" fill="none"/>
<path d="M213.5 434V384.9" stroke="#ff013d" stroke-width="1" fill="none"/>
<path d="M214.5 434V400.3M230.5 434V400.2M284.5 434V400.2M314.5 434V400.2" stroke="#ff0cbb" stroke-width="1" fill="none"/>
<path d="M222.5 434V400.4M331.5 434V391.2" stroke="#ff013f" stroke-width="1" fill="none"/>
<path d="M224.5 434V403.6" stroke="#ff0030" stroke-width="1" fill="none"/>
<path d="M227.5 434V398.2" stroke="#ff0137" stroke-width="1" fill="none"/>
<path d="M228.5 434V387.0M313.5 434V386.9M341.5 434V386.8M343.5 434V386.2" stroke="#ff0dc4" stroke-width="1" fill="none"/>
<path d="M233.5 434V399.5M317.5 434V399.5" stroke="#ff0cbd" stroke-width="1" fill="none"/>
<path d="M235.5 434V400.6M306.5 434V400.5" stroke="#ff0cba" stroke-width="1" fill="none"/>
<path d="M236.5 434V414.5" stroke="#ff0790" stroke-width="1" fill="none"/>
<path d="M239.5 434V412.7M241.5 434V412.9M252.5 434V412.9M256.5 434V412.9M265.5 434V412.8" stroke="#ff0899" stroke-width="1" fill="none"/>
<path d="M242.5 434V414.4" stroke="#ff0891" stroke-width="1" fill="none"/>
<path d="M243.5 434V410.3" stroke="#ff0243" stroke-width="1" fill="none"/>
<path d="M244.5 434V414.2M257.5 434V414.2M281.5 434V414.2" stroke="#ff0893" stroke-width="1" fill="none"/>
<path d="M247.5 434V412.5" stroke="#ff089a" stroke-width="1" fill="none"/>
<path d="M251.5 434V414.3" stroke="#ff0892" stroke-width="1" fill="none"/>
<path d="M261.5 434V414.0M268.5 434V414.0" stroke="#ff0895" stroke-width="1" fill="none"/>
<path d="M262.5 434V412.0" stroke="#ff099b" stroke-width="1" fill="none"/>
<path d="M264.5 434V416.0" stroke="#ff0681" stroke-width="1" fill="none"/>
<path d="M275.5 434V413.9" stroke="#ff0133" stroke-width="1" fill="none"/>
<path d="M276.5 434V416.3" stroke="#ff067f" stroke-width="1" fill="none"/>
<path d="M277.5 434V405.7" stroke="#ff0aac" stroke-width="1" fill="none"/>
<path d="M283.5 434V403.5" stroke="#ff0bb2" stroke-width="1" fill="none"/>
<path d="M285.5 434V403.3" stroke="#ff0bb3" stroke-width="1" fill="none"/>
<path d="M286.5 434V401.7" stroke="#ff0131" stroke-width="1" fill="none"/>
<path d="M287.5 434V401.1" stroke="#ff0bb9" stroke-width="1" fill="none"/>
<path d="M289.5 434V398.7" stroke="#ff024b" stroke-width="1" fill="none"/>
<path d="M295.5 434V400.8" stroke="#ff0cb9" stroke-width="1" fill="none"/>
<path d="M305.5 434V395.2" stroke="#ff0246" stroke-width="1" fill="none"/>
<path d="M307.5 434V396.9M337.5 434V390.9M383.5 434V387.1" stroke="#ff0139" stroke-width="1" fill="none"/>
<path d="M318.5 434V393.6" stroke="#ff0242" stroke-width="1" fill="none"/>
<path d="M322.5 434V396.8" stroke="#ff0023" stroke-width="1" fill="none"/>
<path d="M329.5 434V390.6M384.5 434V391.0" stroke="#ff0dc2" stroke-width="1" fill="none"/>
<path d="M330.5 434V385.3" stroke="#ff002c" stroke-width="1" fill="none"/>
<path d="M333.5 434V386.2M338.5 434V389.7" stroke="#ff024a" stroke-width="1" fill="none"/>
<path d="M336.5 434V382.9M345.5 434V382.8" stroke="#ff0dc6" stroke-width="1" fill="none"/>
<path d="M339.5 434V379.1M348.5 434V380.5M350.5 434V379.8M352.5 434V379.2M353.5 434V380.2M357.5 434V380.9M373.5 434V379.8" stroke="#ff0dc7" stroke-width="1" fill="none"/>
<path d="M340.5 434V391.2" stroke="#ff0cc2" stroke-width="1" fill="none"/>
<path d="M344.5 434V384.6" stroke="#ff0dc5" stroke-width="1" fill="none"/>
<path d="M347.5 434V380.4" stroke="#ff013c" stroke-width="1" fill="none"/>
<path d="M351.5 434V377.2M378.5 434V370.0" stroke="#ff002f" stroke-width="1" fill="none"/>
<path d="M359.5 434V375.7" stroke="#ff0dc9" stroke-width="1" fill="none"/>
<path d="M361.5 434V373.8M362.5 434V373.1M364.5 434V373.5M377.5 434V373.6" stroke="#ff0eca" stroke-width="1" fill="none"/>
<path d="M363.5 434V371.7M371.5 434V371.1" stroke="#ff0ecb" stroke-width="1" fill="none"/>
<path d="M368.5 434V377.6" stroke="#ff0dc8" stroke-width="1" fill="none"/>
<path d="M376.5 434V377.2" stroke="#ff013e" stroke-width="1" fill="none"/>
<path d="M379.5 434V374.9" stroke="#ff0ec9" stroke-width="1" fill="none"/>
<path d="M379.5 434V357M387.5 434V377.7M388.5 434V390" stroke="#ff0050" stroke-width="1" fill="none"/>
<path d="M388.5 300V390" stroke="#e4e4e4" stroke-width="1" fill="none"/>
<path d="M49.5 371V375M50.5 371V373M51.5 371V377M52.5 371V377M53.5 365V373M54.5 365V372M55.5 370V375M56.5 372V375M57.5 372V376M58.5 374V376M59.5 374V377M60.5 375V379M61.5 374V379M62.5 371V376M63.5 371V374M64.5 372V374M65.5 372V375M66.5 372V375M67.5 370V374M68.5 370V373M69.5 371V381M70.5 371V381M71.5 371V373M72.5 371V375M73.5 373V375M74.5 373V376M75.5 374V376M76.5 370V376M77.5 370V373M78.5 371V373M79.5 371V373M80.5 371V373M81.5 369V373M82.5 369V373M83.5 368V373M84.5 367V370M85.5 367V370M86.5 367V370M87.5 367V369M88.5 366V369M89.5 366V368M90.5 366V373M91.5 361V373M92.5 361V364M93.5 360V364M94.5 360V362M95.5 360V362M96.5 360V363M97.5 361V364M98.5 355V364M99.5 355V362M100.5 356V362M101.5 356V360M102.5 353V360M103.5 353V361M104.5 359V362M105.5 360V362M106.5 356V362M107.5 354V358M108.5 354V358M109.5 356V359M110.5 353V359M111.5 353V358M112.5 356V361M113.5 356V361M114.5 356V359M115.5 357V359M116.5 357V362M117.5 359V362M118.5 359V363M119.5 359V363M120.5 357V361M121.5 355V359M122.5 354V357M123.5 354V360M124.5 358V360M125.5 358V361M126.5 359V361M127.5 358V361M128.5 358V361M129.5 357V361M130.5 356V359M131.5 356V358M132.5 356V361M133.5 359V363M134.5 361V364M135.5 359V364M136.5 359V364M137.5 362V364M138.5 359V364M139.5 358V361M140.5 358V362M141.5 360V364M142.5 362V365M143.5 362V365M144.5 361V364M145.5 361V363M146.5 359V363M147.5 356V361M148.5 356V364M149.5 362V365M150.5 359V365M151.5 359V367M152.5 365V369M153.5 367V369M154.5 367V369M155.5 367V374M156.5 367V374M157.5 366V369M158.5 363V368M159.5 363V366M160.5 364V366M161.5 364V368M162.5 365V368M163.5 362V367M164.5 362V366M165.5 363V366M166.5 363V368M167.5 365V368M168.5 362V367M169.5 362V366M170.5 364V367M171.5 365V368M172.5 364V368M173.5 364V373M174.5 365V373M175.5 360V367M176.5 360V365M177.5 363V371M178.5 365V371M179.5 365V369M180.5 364V369M181.5 364V367M182.5 363V367M183.5 362V365M184.5 358V364M185.5 358V366M186.5 364V367M187.5 365V367M188.5 365V367M189.5 365V372M190.5 364V372M191.5 364V368M192.5 366V369M193.5 364V369M194.5 363V366M195.5 363V365M196.5 362V365M197.5 362V364M198.5 361V364M199.5 361V363M200.5 361V367M201.5 364V367M202.5 364V366M203.5 364V367M204.5 362V367M205.5 362V365M206.5 360V365M207.5 360V370M208.5 358V370M209.5 358V363M210.5 361V366M211.5 364V366M212.5 361V366M213.5 361V366M214.5 358V366M215.5 358V365M216.5 363V368M217.5 362V368M218.5 362V365M219.5 363V367M220.5 365V368M221.5 364V368M222.5 363V366M223.5 363V371M224.5 365V371M225.5 363V367M226.5 363V365M227.5 363V366M228.5 364V366M229.5 360V366M230.5 360V363M231.5 361V367M232.5 365V367M233.5 359V367M234.5 359V366M235.5 363V366M236.5 356V365M237.5 356V366M238.5 361V366M239.5 358V363M240.5 356V360M241.5 356V364M242.5 362V365M243.5 363V365M244.5 363V366M245.5 362V366M246.5 362V365M247.5 362V365M248.5 362V364M249.5 362V368M250.5 364V368M251.5 363V366M252.5 362V365M253.5 362V364M254.5 360V364M255.5 360V364M256.5 362V366M257.5 364V367M258.5 362V367M259.5 358V364M260.5 358V363M261.5 361V366M262.5 364V366M263.5 364V369M264.5 362V369M265.5 362V368M266.5 362V368M267.5 361V364M268.5 360V363M269.5 360V364M270.5 360V364M271.5 360V363M272.5 358V363M273.5 358V366M274.5 362V366M275.5 362V364M276.5 362V365M277.5 362V365M278.5 362V371M279.5 361V371M280.5 361V365M281.5 363V367M282.5 363V367M283.5 362V365M284.5 362V367M285.5 364V367M286.5 361V366M287.5 361V365M288.5 362V365M289.5 362V365M290.5 358V365M291.5 358V363M292.5 361V370M293.5 362V370M294.5 362V365M295.5 361V365M296.5 361V364M297.5 360V364M298.5 360V365M299.5 363V366M300.5 361V366M301.5 360V363M302.5 360V363M303.5 359V363M304.5 359V363M305.5 361V364M306.5 360V364M307.5 360V366M308.5 360V366M309.5 360V365M310.5 363V365M311.5 360V365M312.5 360V362M313.5 359V362M314.5 359V363M315.5 361V366M316.5 357V366M317.5 357V362M318.5 360V364M319.5 362V366M320.5 358V366M321.5 358V361M322.5 353V361M323.5 353V363M324.5 361V363M325.5 360V363M326.5 357V362M327.5 357V360M328.5 358V362M329.5 360V362M330.5 360V362M331.5 360V363M332.5 358V363M333.5 358V362M334.5 354V362M335.5 354V360M336.5 358V362M337.5 360V363M338.5 360V363M339.5 360V362M340.5 360V362M341.5 357V362M342.5 357V360M343.5 356V360M344.5 350V358M345.5 350V355M346.5 353V356M347.5 354V359M348.5 357V360M349.5 356V360M350.5 356V358M351.5 353V358M352.5 353V356M353.5 354V360M354.5 355V360M355.5 355V358M356.5 355V358M357.5 354V357M358.5 353V356M359.5 352V355M360.5 352V358M361.5 355V358M362.5 355V361M363.5 354V361M364.5 353V356M365.5 353V356M366.5 354V359M367.5 357V362M368.5 355V362M369.5 352V357M370.5 352V354M371.5 352V354M372.5 352V355M373.5 353V357M374.5 354V357M375.5 354V358M376.5 356V359M377.5 353V359M378.5 353V355M379.5 353V357M380.5 354V357M381.5 354V356M382.5 354V357M383.5 355V357M384.5 352V357M385.5 352V354M386.5 349V354M387.5 349V351" stroke="#f412f4" stroke-width="1" fill="none"/>
</svg>
<div class="a ax" style="left:11px;top:130.5px;width:30px;text-align:right">5000</div>
<div class="a ax" style="left:11px;top:157.5px;width:30px;text-align:right">4000</div>
<div class="a ax" style="left:11px;top:184.5px;width:30px;text-align:right">3000</div>
<div class="a ax" style="left:11px;top:210.5px;width:30px;text-align:right">2000</div>
<div class="a ax" style="left:11px;top:237.5px;width:30px;text-align:right">1000</div>
<div class="a ax" style="left:11px;top:292.5px;width:30px;text-align:right">500</div>
<div class="a ax" style="left:11px;top:319.5px;width:30px;text-align:right">400</div>
<div class="a ax" style="left:11px;top:346.5px;width:30px;text-align:right">300</div>
<div class="a ax" style="left:11px;top:372.5px;width:30px;text-align:right">200</div>
<div class="a ax" style="left:11px;top:399.5px;width:30px;text-align:right">100</div>
<div class="a ax" style="left:470.4px;top:249px">2</div>
<div class="a ax" style="left:470.4px;top:233px">4</div>
<div class="a ax" style="left:470.4px;top:218px">6</div>
<div class="a ax" style="left:470.4px;top:202px">8</div>
<div class="a ax" style="left:470.4px;top:186px">10</div>
<div class="a ax" style="left:470.4px;top:170px">12</div>
<div class="a ax" style="left:470.4px;top:155px">14</div>
<div class="a ax" style="left:470.4px;top:139px">16</div>
<div class="a ax" style="left:470.4px;top:293px">20</div>
<div class="a ax" style="left:470.4px;top:320px">16</div>
<div class="a ax" style="left:470.4px;top:347px">12</div>
<div class="a ax" style="left:470.4px;top:373px">8</div>
<div class="a ax" style="left:470.4px;top:400px">4</div>
<div class="a ax" style="left:34.5px;top:275px;width:30px;text-align:center">0.0</div>
<div class="a ax" style="left:34.5px;top:437px;width:30px;text-align:center">0.0</div>
<div class="a ax" style="left:80.5px;top:275px;width:30px;text-align:center">0.5</div>
<div class="a ax" style="left:80.5px;top:437px;width:30px;text-align:center">0.5</div>
<div class="a ax" style="left:126.5px;top:275px;width:30px;text-align:center">1.0</div>
<div class="a ax" style="left:126.5px;top:437px;width:30px;text-align:center">1.0</div>
<div class="a ax" style="left:173.5px;top:275px;width:30px;text-align:center">1.5</div>
<div class="a ax" style="left:173.5px;top:437px;width:30px;text-align:center">1.5</div>
<div class="a ax" style="left:219.5px;top:275px;width:30px;text-align:center">2.0</div>
<div class="a ax" style="left:219.5px;top:437px;width:30px;text-align:center">2.0</div>
<div class="a ax" style="left:266.5px;top:275px;width:30px;text-align:center">2.5</div>
<div class="a ax" style="left:266.5px;top:437px;width:30px;text-align:center">2.5</div>
<div class="a ax" style="left:312.5px;top:275px;width:30px;text-align:center">3.0</div>
<div class="a ax" style="left:312.5px;top:437px;width:30px;text-align:center">3.0</div>
<div class="a ax" style="left:359.5px;top:275px;width:30px;text-align:center">3.5</div>
<div class="a ax" style="left:359.5px;top:437px;width:30px;text-align:center">3.5</div>
<div class="a ax" style="left:405.5px;top:275px;width:30px;text-align:center">4.0</div>
<div class="a ax" style="left:405.5px;top:437px;width:30px;text-align:center">4.0</div>
<div class="a ax" style="left:452.5px;top:275px;width:30px;text-align:center">4.5</div>
<div class="a ax" style="left:452.5px;top:437px;width:30px;text-align:center">4.5</div>
<div class="gb" style="left:491px;top:131px;width:140px;height:84px"></div>
<div class="gt bl" style="left:498px;top:126px;background:#FBFBFC">Disc Info</div>
<div class="a " style="left:502px;top:141px;">Type:</div>
<div class="a vl" style="left:542px;top:141px;">DVD-R</div>
<div class="a " style="left:502px;top:158px;">ID:</div>
<div class="a vl" style="left:542px;top:158px;">RITEKG05</div>
<div class="a " style="left:502px;top:176px;">Date:</div>
<div class="a vl" style="left:541px;top:176px;">n/a</div>
<div class="a " style="left:502px;top:194px;">Label:</div>
<div class="gb" style="left:491px;top:223px;width:140px;height:203px"></div>
<div class="gt bl" style="left:498px;top:217px;background:#F8F8F6">Settings</div>
<div class="a " style="left:502px;top:233px;">Speed</div>
<div class="inp" style="left:554px;top:229px;width:71px;height:21px;line-height:20px;padding-left:3px">8 X</div>
<div class="a ddb" style="left:608px;top:231px;"></div>
<svg class="a" style="left:611px;top:236px" width="10" height="8" viewBox="0 0 10 8"><path d="M1.5 1.5L5 5L8.5 1.5" stroke="#4D6185" stroke-width="2" fill="none"/></svg>
<div class="a " style="left:502px;top:266px;">Start</div>
<div class="inp" style="left:554px;top:260px;width:60px;height:20px;line-height:18px;padding-left:2px">0000 MB</div>
<div class="a " style="left:502px;top:289.5px;">End</div>
<div class="inp" style="left:554px;top:284px;width:60px;height:20px;line-height:18px;padding-left:2px">3752 MB</div>
<div class="cb" style="left:502px;top:314px;"></div>
<div class="a " style="left:518px;top:314px;">Quick Scan</div>
<div class="cb" style="left:502px;top:342px;"><svg style="position:absolute;left:1px;top:1px" width="9" height="9" viewBox="0 0 9 9"><path d="M1 3.5L3.5 6L8 1.5" stroke="#21A121" stroke-width="2" fill="none"/></svg></div>
<div class="a " style="left:518px;top:342px;">Show C1/PIE</div>
<div class="cb" style="left:502px;top:358px;"><svg style="position:absolute;left:1px;top:1px" width="9" height="9" viewBox="0 0 9 9"><path d="M1 3.5L3.5 6L8 1.5" stroke="#21A121" stroke-width="2" fill="none"/></svg></div>
<div class="a " style="left:518px;top:358px;">Show C2/PIF</div>
<div class="cb" style="left:502px;top:375px;"><svg style="position:absolute;left:1px;top:1px" width="9" height="9" viewBox="0 0 9 9"><path d="M1 3.5L3.5 6L8 1.5" stroke="#21A121" stroke-width="2" fill="none"/></svg></div>
<div class="a " style="left:518px;top:375px;">Show Jitter</div>
<div class="cb" style="left:502px;top:391px;"><svg style="position:absolute;left:1px;top:1px" width="9" height="9" viewBox="0 0 9 9"><path d="M1 3.5L3.5 6L8 1.5" stroke="#21A121" stroke-width="2" fill="none"/></svg></div>
<div class="a " style="left:518px;top:391px;">Show Read Speed</div>
<div class="cb" style="left:502px;top:408px;border-color:#CAC8BB;background:#fff;"><svg style="position:absolute;left:1px;top:1px" width="9" height="9" viewBox="0 0 9 9"><path d="M1 3.5L3.5 6L8 1.5" stroke="#BDBCB0" stroke-width="2" fill="none"/></svg></div>
<div class="a " style="left:518px;top:408px;color:#ACA899">Show Write Speed</div>
<div class="gb" style="left:491px;top:432px;width:140px;height:27px"></div>
<div class="a " style="left:502px;top:440px;">Quality Score:</div>
<div class="a v" style="left:540px;top:440px;width:80px;text-align:right">0</div>
<div class="gb" style="left:491px;top:464px;width:140px;height:57px"></div>
<div class="a " style="left:502px;top:473px;">Progress:</div>
<div class="a v" style="left:541px;top:473px;width:80px;text-align:right">100 %</div>
<div class="a " style="left:502px;top:489px;">Position:</div>
<div class="a v" style="left:541px;top:489px;width:80px;text-align:right">3751 MB</div>
<div class="a " style="left:502px;top:504px;">Speed:</div>
<div class="a v" style="left:541px;top:504px;width:80px;text-align:right">7.79 X</div>
<div class="gbs" style="left:14px;top:464px;width:146px;height:56px"></div>
<div class="a" style="left:22px;top:463px;width:55px;height:3px;background:#F4F3EE"></div>
<div class="sq" style="left:24px;top:460.5px;background:#0A84FF"></div>
<div class="a" style="left:35.5px;top:458px;letter-spacing:-0.3px">PI Errors</div>
<div class="a " style="left:22px;top:474px;">Average:</div>
<div class="a v" style="left:70px;top:474px;width:80px;text-align:right">1390.81</div>
<div class="a " style="left:22px;top:489px;">Maximum:</div>
<div class="a v" style="left:70px;top:489px;width:80px;text-align:right">2830</div>
<div class="a " style="left:22px;top:505px;">Total:</div>
<div class="a v" style="left:70px;top:505px;width:80px;text-align:right">19288912</div>
<div class="gbs" style="left:172px;top:464px;width:146px;height:56px"></div>
<div class="a" style="left:180px;top:463px;width:64px;height:3px;background:#F4F3EE"></div>
<div class="sq" style="left:182px;top:460.5px;background:#FFFF00"></div>
<div class="a" style="left:193.5px;top:458px;letter-spacing:-0.3px">PI Failures</div>
<div class="a " style="left:181px;top:474px;">Average:</div>
<div class="a v" style="left:229px;top:474px;width:80px;text-align:right">82.70</div>
<div class="a " style="left:181px;top:489px;">Maximum:</div>
<div class="a v" style="left:229px;top:489px;width:80px;text-align:right">301</div>
<div class="a " style="left:181px;top:505px;">Total:</div>
<div class="a v" style="left:229px;top:505px;width:80px;text-align:right">1044105</div>
<div class="gbs" style="left:331px;top:464px;width:147px;height:42px"></div>
<div class="a" style="left:339px;top:463px;width:37px;height:3px;background:#F4F3EE"></div>
<div class="sq" style="left:341px;top:460.5px;background:#FF00FF"></div>
<div class="a" style="left:352.5px;top:458px;letter-spacing:0px">Jitter</div>
<div class="a " style="left:340px;top:474px;">Average:</div>
<div class="a v ls" style="left:387px;top:474px;width:80px;text-align:right">10.06 %</div>
<div class="a " style="left:340px;top:489px;">Maximum:</div>
<div class="a v ls" style="left:387px;top:489px;width:80px;text-align:right">12.6 %</div>
<div class="a " style="left:340px;top:508px;letter-spacing:-0.4px">PO Failures:</div>
<div class="a v" style="left:387px;top:508px;width:80px;text-align:right">881</div>
</div></body></html>
